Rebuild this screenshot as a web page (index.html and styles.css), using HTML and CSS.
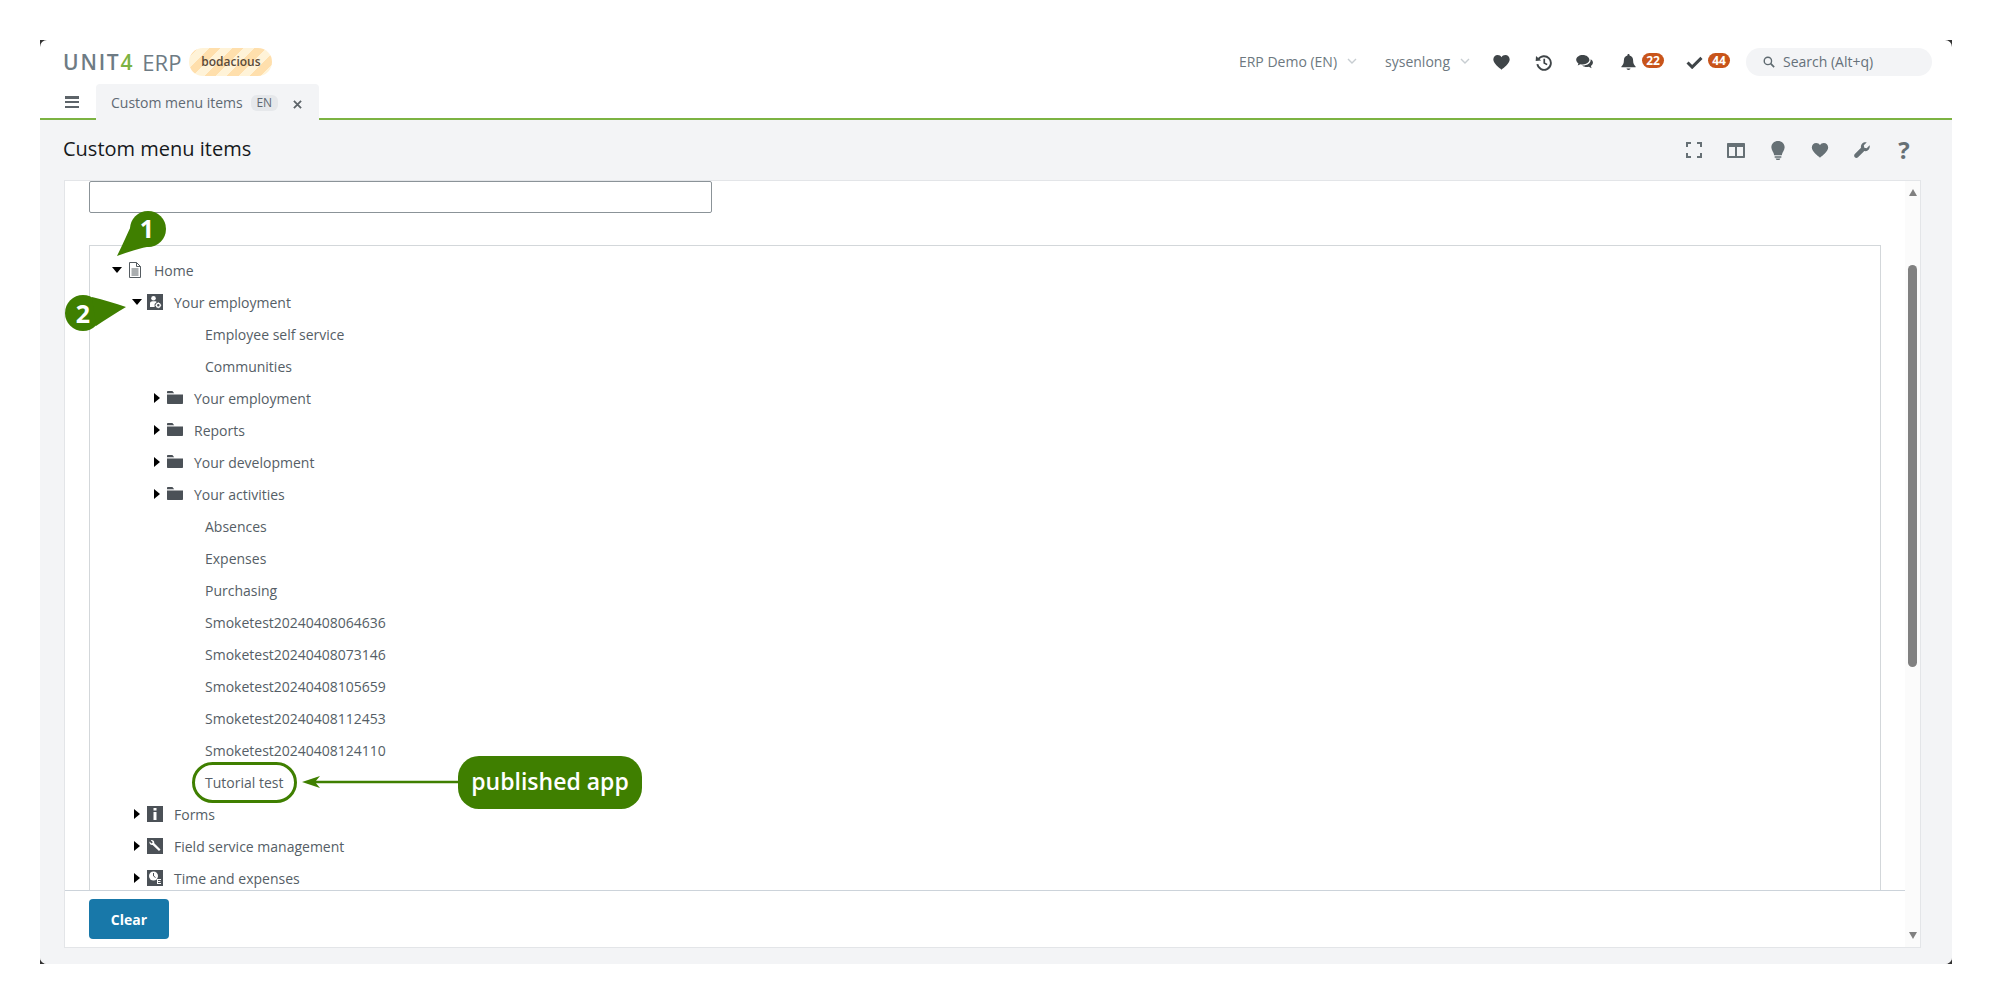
FILE: index.html
```html
<!DOCTYPE html>
<html lang="en">
<head>
<meta charset="utf-8">
<title>Custom menu items</title>
<link rel="stylesheet" href="styles.css">
</head>
<body>
<svg class="defs" width="0" height="0" aria-hidden="true">
  <symbol id="folder" viewBox="0 0 16 13"><path d="M0 4h16v8c0 .6-.4 1-1 1H1c-.6 0-1-.4-1-1zM0 3h16v.5H0zM0 .8C0 .3.3 0 .8 0h4.600l1.800 2.200H0z"/></symbol>
  <symbol id="arrow-right" viewBox="0 0 6 10"><path d="M0 0l6 5-6 5z"/></symbol>
  <symbol id="arrow-down" viewBox="0 0 10 6"><path d="M0 0h10L5 6z"/></symbol>
  <symbol id="chev" viewBox="0 0 10 6"><path d="M1 1l4 4 4-4" fill="none" stroke="currentColor" stroke-width="1.4"/></symbol>
  <symbol id="heart" viewBox="0 0 24 22"><path d="M12 21.5C9 18.8 0 12.8 0 6.600 0 2.800 2.800 0 6.400 0 8.800 0 11 1.300 12 3.200 13 1.300 15.200 0 17.600 0 21.200 0 24 2.800 24 6.600c0 6.200-9 12.200-12 14.900z"/></symbol>
</svg>

<div class="frame">
  <span class="corner tl"></span><span class="corner tr"></span><span class="corner bl"></span><span class="corner br"></span>
  <div class="window">
    <header class="topbar">
      <div class="brand">
        <span class="logo">UNIT<span class="logo-4">4</span></span>
        <span class="erp">ERP</span>
        <span class="env">bodacious</span>
      </div>
      <div class="actions">
        <span class="menu menu-env">ERP Demo (EN)<svg class="chev"><use href="#chev"/></svg></span>
        <span class="menu menu-user">sysenlong<svg class="chev"><use href="#chev"/></svg></span>
        <svg class="top-icon heart-icon"><use href="#heart"/></svg>
        <svg class="top-icon history-icon" viewBox="0 0 20 20"><path d="M3.200 6.500A8 8 0 1 1 2.200 12" fill="none" stroke="currentColor" stroke-width="2.200"/><path d="M.6 2.400l6 5.300-6.400.6z"/><path d="M10.300 5.500v5l3.400 2" fill="none" stroke="currentColor" stroke-width="2"/></svg>
        <svg class="top-icon comments-icon" viewBox="0 0 20 17"><path d="M7.500 0C3.400 0 0 2.400 0 5.500c0 1.700 1.100 3.200 2.600 4.200L1.700 12l3.200-1.500c.8.2 1.700.3 2.600.3 4.100 0 7.500-2.400 7.500-5.300S11.600 0 7.500 0z"/><path d="M16.200 4.400c.2.400.2.800.2 1.200 0 3.800-4 6.200-8.800 6.200h-.8c1.300 1.100 3.200 1.700 5.200 1.700.8 0 1.600-.1 2.300-.3l3.200 1.800-.9-2.600c1.400-.9 2.400-2.200 2.400-3.800 0-1.700-1.200-3.200-3-4.200z"/></svg>
        <span class="notify notify-bell">
          <svg class="top-icon bell-icon" viewBox="0 0 16 18"><path d="M8 0c.7 0 1.200.5 1.200 1.200v.6c2.700.6 4 2.800 4 5.400 0 3.600 1 4.900 2.800 6.800v1H0v-1c1.800-1.900 2.800-3.200 2.800-6.800 0-2.600 1.300-4.800 4-5.400v-.6C6.800.5 7.300 0 8 0zM5.800 16.400h4.400c0 1-1 1.600-2.200 1.600s-2.200-.6-2.200-1.600z"/></svg>
          <span class="count">22</span>
        </span>
        <span class="notify">
          <svg class="top-icon check-icon" viewBox="0 0 18 14"><path d="M1.500 7l5 5L16.500 2" fill="none" stroke="currentColor" stroke-width="3.200"/></svg>
          <span class="count">44</span>
        </span>
        <div class="search">
          <svg class="search-icon" viewBox="0 0 14 14"><circle cx="5.700" cy="5.700" r="4.300" fill="none" stroke="currentColor" stroke-width="1.600"/><path d="M9 9l4 4" stroke="currentColor" stroke-width="2"/></svg>
          <span class="search-label">Search (Alt+q)</span>
        </div>
      </div>
    </header>

    <nav class="tabbar">
      <span class="hamburger"><i></i><i></i><i></i></span>
      <div class="tab">
        <span class="tab-label">Custom menu items</span>
        <span class="chip">EN</span>
        <svg class="tab-close" viewBox="0 0 10 10"><path d="M1 1l8 8M9 1l-8 8" stroke="currentColor" stroke-width="2"/></svg>
      </div>
    </nav>

    <main class="content">
      <div class="titlebar">
        <h1 class="title">Custom menu items</h1>
        <div class="tools">
          <span class="tool"><svg class="tool-svg" viewBox="0 0 16 16"><path d="M1 5V1h4M11 1h4v4M15 11v4h-4M5 15H1v-4" fill="none" stroke="currentColor" stroke-width="2"/></svg></span>
          <span class="tool"><svg class="tool-wide" viewBox="0 0 18 15"><path fill-rule="evenodd" d="M1 0h16c.6 0 1 .4 1 1v13c0 .6-.4 1-1 1H1c-.6 0-1-.4-1-1V1c0-.6.4-1 1-1zM2 4v9h6V4zm8 0v9h6V4z"/></svg></span>
          <span class="tool"><svg class="tool-bulb" viewBox="0 0 14 20"><path d="M7 0c3.900 0 7 2.800 7 6.600 0 3.300-2.500 4.900-3 8.400H3C2.500 11.500 0 9.900 0 6.600 0 2.800 3.100 0 7 0zM3.500 16h7v1.500h-7zM4.500 18.300h5L8.500 20h-3z"/></svg></span>
          <span class="tool"><svg class="tool-wide"><use href="#heart"/></svg></span>
          <span class="tool"><svg class="tool-svg" viewBox="0 0 16 16"><path d="M15.600 3.300c.5 1.700 0 3.500-1.300 4.700-1.100 1-2.600 1.400-4 1.100L4 15.300c-.9.900-2.300.9-3.200 0-.9-.9-.9-2.300 0-3.200L7 5.800c-.4-1.500 0-3.100 1.200-4.300C9.400.3 11.100-.1 12.700.4L9.800 3.300l.5 2.400 2.400.5z"/></svg></span>
          <span class="tool tool-help">?</span>
        </div>
      </div>

      <section class="panel">
        <div class="panel-main">
          <div class="form">
            <input class="name-input" type="text" aria-label="Name">
            <div class="tree">
              <div class="row l1"><svg class="arrow-d"><use href="#arrow-down"/></svg><span class="ico"><svg class="doc" viewBox="0 0 12 16"><path d="M.5.5h7l4 4v11H.5zM7.500.5v4h4" fill="none" stroke="currentColor"/><path d="M2.500 7h7M2.500 9h7M2.500 11h7M2.500 13h7" stroke="currentColor"/></svg></span><span>Home</span></div>
              <div class="row l2"><svg class="arrow-d"><use href="#arrow-down"/></svg><span class="ico"><svg class="tile" viewBox="0 0 16 16"><rect width="16" height="16" fill="#4b5157"/><circle cx="6.500" cy="4.300" r="2.300" fill="#fff"/><path d="M3 13V9.500C3 8 4.200 7.200 5.500 7.200h2.500c.9 0 1.500.4 1.700.9L7.600 10v3z" fill="#fff"/><circle cx="11.300" cy="11.300" r="1.900" fill="none" stroke="#fff" stroke-width="1.300"/><path d="M11.300 8.400v1M11.300 13.200v1M8.400 11.300h1M13.200 11.300h1" stroke="#fff"/></svg></span><span>Your employment</span></div>
              <div class="row leaf">Employee self service</div>
              <div class="row leaf">Communities</div>
              <div class="row l3"><svg class="arrow-r"><use href="#arrow-right"/></svg><span class="ico"><svg class="folder"><use href="#folder"/></svg></span><span>Your employment</span></div>
              <div class="row l3"><svg class="arrow-r"><use href="#arrow-right"/></svg><span class="ico"><svg class="folder"><use href="#folder"/></svg></span><span>Reports</span></div>
              <div class="row l3"><svg class="arrow-r"><use href="#arrow-right"/></svg><span class="ico"><svg class="folder"><use href="#folder"/></svg></span><span>Your development</span></div>
              <div class="row l3"><svg class="arrow-r"><use href="#arrow-right"/></svg><span class="ico"><svg class="folder"><use href="#folder"/></svg></span><span>Your activities</span></div>
              <div class="row leaf">Absences</div>
              <div class="row leaf">Expenses</div>
              <div class="row leaf">Purchasing</div>
              <div class="row leaf">Smoketest20240408064636</div>
              <div class="row leaf">Smoketest20240408073146</div>
              <div class="row leaf">Smoketest20240408105659</div>
              <div class="row leaf">Smoketest20240408112453</div>
              <div class="row leaf">Smoketest20240408124110</div>
              <div class="row leaf">Tutorial test</div>
              <div class="row l2"><svg class="arrow-r"><use href="#arrow-right"/></svg><span class="ico"><svg class="tile" viewBox="0 0 16 16"><rect width="16" height="16" fill="#4b5157"/><path d="M6.500 2h3v2.500h-3zM6.500 6h3v8h-3z" fill="#fff"/></svg></span><span>Forms</span></div>
              <div class="row l2"><svg class="arrow-r"><use href="#arrow-right"/></svg><span class="ico"><svg class="tile" viewBox="0 0 16 16"><rect width="16" height="16" fill="#4b5157"/><path d="M2.500 3.500L4.500 5.500 5.800 4.200 3.800 2.200C5.500 1.700 7.500 2.800 7.300 5.200L13.500 11.500 12 13 5.600 6.900C3.500 7.200 2 5.500 2.500 3.500z" fill="#fff"/></svg></span><span>Field service management</span></div>
              <div class="row l2"><svg class="arrow-r"><use href="#arrow-right"/></svg><span class="ico"><svg class="tile" viewBox="0 0 16 16"><rect width="16" height="16" fill="#4b5157"/><circle cx="6.500" cy="6" r="4.500" fill="#fff"/><path d="M6.500 3v3l2 1.500" fill="none" stroke="#4b5157"/><path d="M10 9h4v1h-3v1h2.500v1H11v1h3v1h-4z" fill="#fff"/></svg></span><span>Time and expenses</span></div>
            </div>
          </div>
          <div class="footer"><button class="btn" type="button">Clear</button></div>
        </div>
        <div class="scrollbar">
          <span class="sb-up"></span>
          <span class="sb-thumb"></span>
          <span class="sb-down"></span>
        </div>
      </section>
    </main>
  </div>
</div>

<svg class="annotations" viewBox="0 0 1992 1004">
  <g class="anno-fill">
    <circle cx="148" cy="229" r="18"/>
    <path d="M117 256C123 244 128 232 133 222L152 246C140 248 128 252 117 256z"/>
    <circle cx="83" cy="313" r="18"/>
    <path d="M126 307C115 303 104 300 92 297L96 326C106 319 116 313 126 307z"/>
    <rect x="458" y="756" width="184" height="53" rx="21"/>
    <path d="M302 782l18-6-4 4.700h142v2.600H316l4 4.700z"/>
  </g>
  <rect class="anno-ring" x="193.500" y="763.500" width="102" height="38" rx="19"/>
  <text class="anno-num" x="147" y="238">1</text>
  <text class="anno-num" x="83" y="323">2</text>
  <text class="anno-pill" x="550" y="790">published app</text>
</svg>
</body>
</html>
```
FILE: styles.css
```css
* { box-sizing: border-box; }
html, body { margin: 0; height: 100%; }
body {
  background: #fff;
  font-family: "Open Sans", "Noto Sans", sans-serif;
  font-size: 14px;
  color: #555e66;
  position: relative;
  overflow: hidden;
  padding: 40px;
}
.defs { position: absolute; }

.frame { position: relative; height: 924px; }
.corner { position: absolute; width: 8px; height: 8px; background: #333; }
.tl { top: 0; left: 0; }
.tr { top: 0; right: 0; }
.bl { bottom: 0; left: 0; }
.br { bottom: 0; right: 0; }
.window {
  position: relative;
  height: 100%;
  display: flex;
  flex-direction: column;
  background: #fff;
  border-radius: 7px;
  overflow: hidden;
}

/* top bar */
.topbar {
  height: 44px;
  padding: 8px 20px 8px 23px;
  display: flex;
  align-items: center;
  justify-content: space-between;
  flex: none;
}
.brand { display: flex; align-items: center; }
.logo {
  font-size: 21px;
  line-height: 28px;
  font-weight: 600;
  letter-spacing: 1.8px;
  color: #6e7b84;
}
.logo-4 { color: #7cb342; }
.erp { margin-left: 8px; font-size: 22px; line-height: 28px; color: #6e7b84; }
.env {
  margin-left: 8px;
  width: 83px;
  height: 28px;
  border-radius: 14px;
  font-size: 12px;
  font-weight: 600;
  line-height: 28px;
  text-align: center;
  color: #5a4a38;
  background: repeating-linear-gradient(-45deg, #fff3d8 0 8px, #ffdfac 8px 16px);
}
.actions { display: flex; align-items: center; }
.menu { display: flex; align-items: center; color: #6d7880; font-size: 14px; padding-bottom: 2px; }
.menu-env { margin-right: 28px; }
.menu-user { margin-right: 23px; }
.chev { width: 10px; height: 6px; margin-left: 10px; color: #c7cdd1; }
.top-icon { color: #3f4548; fill: currentColor; flex: none; }
.heart-icon { width: 17px; height: 15px; margin-right: 25px; }
.history-icon { width: 18px; height: 17px; margin-right: 23px; }
.comments-icon { width: 18px; height: 15px; margin-right: 27px; }
.bell-icon { width: 15px; height: 16px; margin-right: 6px; }
.check-icon { width: 17px; height: 13px; margin-right: 5px; }
.notify { display: flex; align-items: center; }
.notify-bell { margin-right: 22px; }
.count {
  width: 22px;
  height: 15px;
  border-radius: 8px;
  background: #c8541a;
  color: #fff;
  font-size: 12px;
  font-weight: 700;
  line-height: 15px;
  text-align: center;
  margin-top: -4px;
}
.search {
  width: 186px;
  height: 28px;
  margin-left: 16px;
  border-radius: 14px;
  background: #f3f4f6;
  display: flex;
  align-items: center;
  padding-left: 17px;
  color: #66717a;
  font-size: 14px;
}
.search-label { margin-top: -2px; }
.search-icon { width: 12px; height: 12px; margin-right: 8px; color: #5f6a70; }

/* tabs */
.tabbar {
  height: 36px;
  flex: none;
  display: flex;
  border-bottom: 2px solid #7cb342;
  padding-left: 25px;
}
.hamburger { width: 14px; margin-top: 12px; height: 12px; display: flex; flex-direction: column; justify-content: space-between; }
.hamburger i { display: block; height: 2.500px; background: #5d6469; }
.tab {
  margin-left: 17px;
  width: 223px;
  height: 36px;
  background: #f3f4f6;
  border-radius: 4px 4px 0 0;
  display: flex;
  align-items: flex-start;
  padding: 9px 0 0 15px;
  color: #5f6a74;
}
.tab-label { line-height: 19px; }
.chip {
  margin: 2px 0 0 8px;
  width: 27px;
  height: 16px;
  border-radius: 6px;
  background: #e6e8eb;
  font-size: 12px;
  line-height: 16px;
  text-align: center;
}
.tab-close { width: 9px; height: 9px; margin: 7px 0 0 15px; color: #5d6469; }

/* content */
.content { flex: 1; min-height: 0; background: #f3f4f6; display: flex; flex-direction: column; padding: 0 31px 16px 24px; }
.titlebar { height: 60px; flex: none; display: flex; align-items: center; justify-content: space-between; padding-bottom: 4px; }
.title { margin: 0 0 0 -1px; font-size: 20px; font-weight: 400; color: #16191c; }
.tools { display: flex; margin-right: -4px; padding-top: 4px; }
.tool { width: 42px; height: 24px; display: flex; align-items: center; justify-content: center; color: #667075; }
.tool svg { fill: currentColor; }
.tool-svg { width: 16px; height: 16px; }
.tool-wide { width: 18px; height: 15px; }
.tool-bulb { width: 14px; height: 19px; }
.tool-help { font-size: 24px; font-weight: 700; line-height: 24px; }

.panel { flex: 1; min-height: 0; background: #fff; border: 1px solid #e3e5e8; display: flex; }
.panel-main { flex: 1; min-width: 0; display: flex; flex-direction: column; }
.form { flex: 1; min-height: 0; overflow: hidden; padding: 0 24px; }
.name-input {
  display: block;
  width: 623px;
  height: 32px;
  border: 1px solid #8b9398;
  border-radius: 2px;
  background: #fff;
  padding: 0;
}
.tree {
  margin-top: 32px;
  height: 700px;
  border: 1px solid #d3d7da;
  border-bottom: 0;
  padding-top: 8px;
}
.row { height: 32px; display: flex; align-items: center; white-space: nowrap; }
.l1 { padding-left: 22px; }
.l2 { padding-left: 42px; }
.l3 { padding-left: 62px; }
.leaf { padding-left: 115px; }
.arrow-d { width: 10px; height: 6px; fill: #000; flex: none; }
.arrow-r { width: 10px; height: 10px; fill: #000; flex: none; }
.ico { width: 16px; height: 16px; margin: -1px 11px 0 5px; display: flex; align-items: center; justify-content: center; flex: none; }
.doc { width: 12px; height: 16px; color: #555c61; }
.tile { width: 16px; height: 16px; display: block; }
.folder { width: 16px; height: 13px; fill: #4b5157; }

.footer { height: 57px; flex: none; border-top: 1px solid #ccd3da; padding: 8px 24px; }
.btn {
  width: 80px;
  height: 40px;
  border: 0;
  border-radius: 4px;
  background: #1878a9;
  color: #fff;
  font: 700 14px "Open Sans", sans-serif;
  padding: 0;
}

.scrollbar { width: 15px; flex: none; background: #fbfbfb; display: flex; flex-direction: column; align-items: center; }
.sb-up, .sb-down { width: 0; height: 0; border-left: 4.500px solid transparent; border-right: 4.500px solid transparent; flex: none; }
.sb-up { margin-top: 8px; border-bottom: 7px solid #808080; }
.sb-thumb { width: 9px; height: 402px; margin-top: 69px; border-radius: 5px; background: #808080; flex: none; }
.sb-down { margin-top: auto; margin-bottom: 8px; border-top: 7px solid #808080; }

/* annotations over the page */
.annotations { position: absolute; top: 0; left: 0; width: 1992px; height: 1004px; pointer-events: none; }
.anno-fill { fill: #3f7f00; }
.anno-ring { fill: none; stroke: #3f7f00; stroke-width: 3; }
.anno-num { fill: #fff; font: 700 25px "Open Sans", sans-serif; text-anchor: middle; }
.anno-pill { fill: #fff; font: 600 23px "Open Sans", sans-serif; text-anchor: middle; }
```
